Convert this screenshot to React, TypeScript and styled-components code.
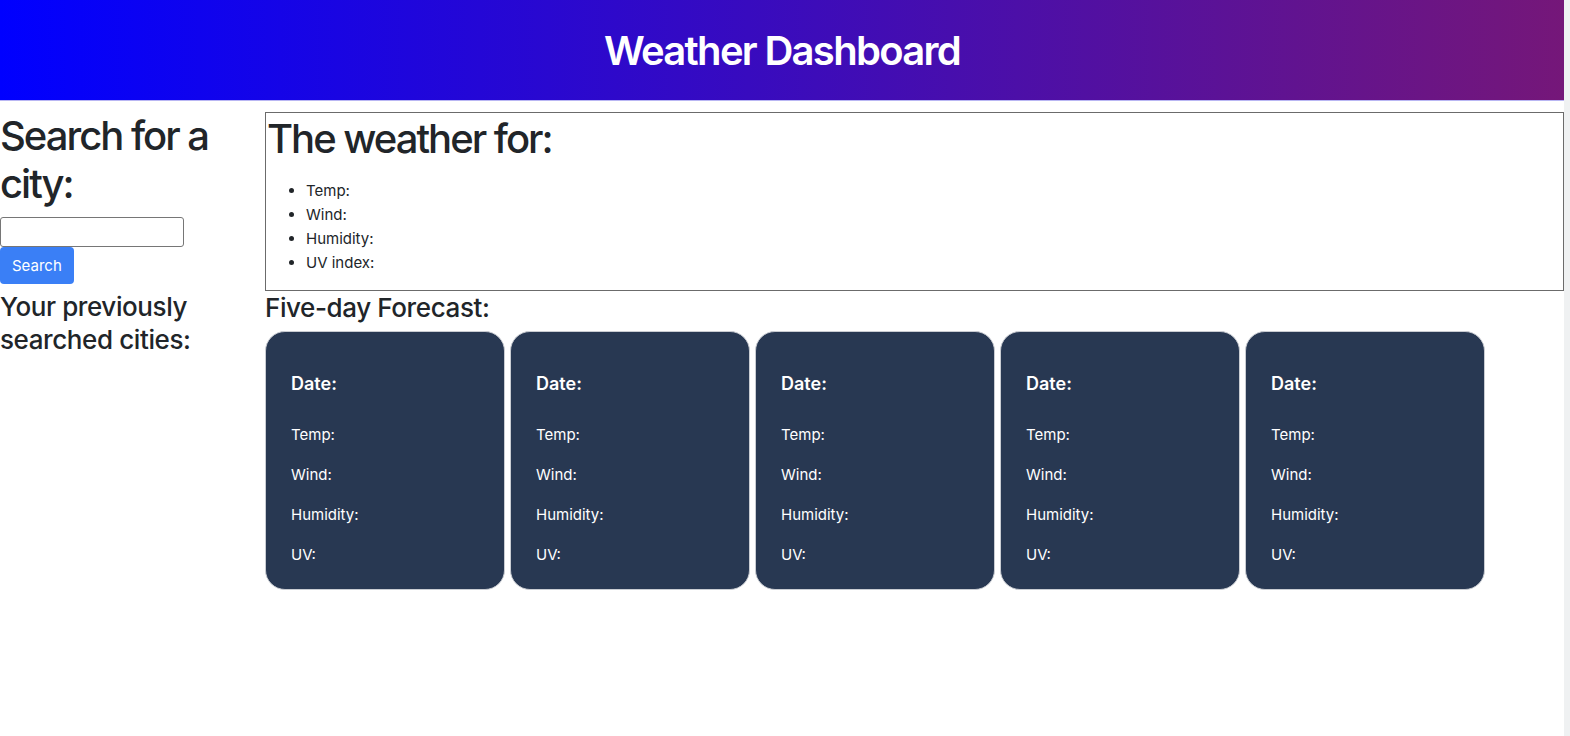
import React from "react";
import styled, { createGlobalStyle } from "styled-components";

const Global = createGlobalStyle`
  html, body { margin: 0; padding: 0; background: #eff1f2; }
  body { font-family: Inter, "Noto Sans", sans-serif; color: #212529; }
  #root { width: 1564px; min-height: 736px; background: #fff; }
  * { box-sizing: border-box; }
`;

const Header = styled.header`
  height: 101px;
  background: linear-gradient(90deg, #0000ff 0%, #751779 100%);
  border-bottom: 1px solid #b9b6f3;
  display: flex;
  align-items: center;
  justify-content: center;
`;

const Title = styled.h1`
  margin: 0;
  color: #fff;
  font-size: 40px;
  font-weight: 600;
  letter-spacing: -1.7px;
`;

const Layout = styled.div`
  display: grid;
  grid-template-columns: 265px 1fr;
  padding-top: 11px;
`;

const Side = styled.aside`
  display: flex;
  flex-direction: column;
  align-items: flex-start;
`;

const BigHeading = styled.h2<{ $max?: number }>`
  margin: 0;
  font-size: 40px;
  line-height: 48px;
  font-weight: 500;
  letter-spacing: -2px;
  max-width: ${(p) => (p.$max ? `${p.$max}px` : "none")};
`;

const SubHeading = styled.h3`
  margin: 0;
  font-size: 26px;
  line-height: 33px;
  font-weight: 500;
  letter-spacing: -0.4px;
`;

const CityInput = styled.input`
  margin-top: 9px;
  width: 184px;
  height: 30px;
  border: 1px solid #767676;
  border-radius: 3px;
`;

const SearchButton = styled.button`
  height: 37px;
  padding: 0 12px;
  background: #3a7ff6;
  color: #fff;
  border: none;
  border-radius: 4px;
  font-family: Inter, sans-serif;
  font-size: 15px;
  margin-bottom: 6px;
`;

const Main = styled.main`
  display: flex;
  flex-direction: column;
  align-items: flex-start;
`;

const Current = styled.section`
  width: 100%;
  height: 179px;
  border: 1px solid #6b6b6b;
  padding: 2px 0 0 1px;
`;

const List = styled.ul`
  margin: 16px 0 0;
  padding-left: 39px;
  font-size: 15px;
  line-height: 24px;
`;

const Forecast = styled.div`
  display: flex;
  gap: 5px;
  margin-top: 7px;
`;

const Card = styled.div`
  width: 240px;
  height: 259px;
  background: #283852;
  border: 1px solid #c9ccd2;
  border-radius: 20px;
  color: #fff;
  padding: 41px 25px 0;
  display: flex;
  flex-direction: column;
`;

const CardDate = styled.h5`
  margin: 0 0 20px;
  font-size: 18px;
  line-height: 22px;
  font-weight: 600;
`;

const CardLine = styled.p`
  margin: 0;
  font-size: 15px;
  line-height: 40px;
`;

export default function App() {
  const days = [0, 1, 2, 3, 4];
  return (
    <>
      <Global />
      <Header>
        <Title>Weather Dashboard</Title>
      </Header>
      <Layout>
        <Side>
          <BigHeading $max={230}>Search for a city:</BigHeading>
          <CityInput type="text" />
          <SearchButton>Search</SearchButton>
          <SubHeading>
            Your previously
            <br />
            searched cities:
          </SubHeading>
        </Side>
        <Main>
          <Current>
            <BigHeading>The weather for:</BigHeading>
            <List>
              <li>Temp:</li>
              <li>Wind:</li>
              <li>Humidity:</li>
              <li>UV index:</li>
            </List>
          </Current>
          <SubHeading>Five-day Forecast:</SubHeading>
          <Forecast>
            {days.map((d) => (
              <Card key={d}>
                <CardDate>Date:</CardDate>
                <CardLine>Temp:</CardLine>
                <CardLine>Wind:</CardLine>
                <CardLine>Humidity:</CardLine>
                <CardLine>UV:</CardLine>
              </Card>
            ))}
          </Forecast>
        </Main>
      </Layout>
    </>
  );
}
